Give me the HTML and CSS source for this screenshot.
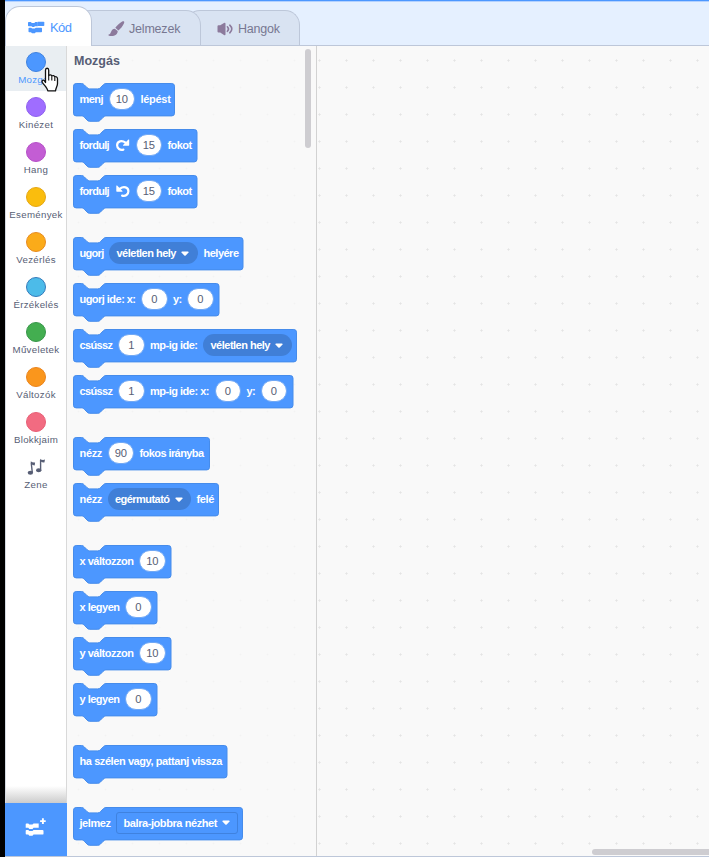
FILE: index.html
```
<!DOCTYPE html>
<html lang="hu">
<head>
<meta charset="utf-8">
<title>Kód</title>
<link rel="stylesheet" href="styles.css">
</head>
<body>
<div class="app">
  <nav class="tabs">
    <div class="tab active">
      <svg width="17" height="13" viewBox="0 0 17 13" fill="#4c97ff"><path d="M.8 1h2l1 1h2.500l1-1h1.700q.8 0 .8.800v3.400h-2.800l-1 .9H4.500l-1-.9H.8Q0 5.200 0 4.500V1.800Q0 1 .8 1Z"/><path d="M9.600.8h5.900q.8 0 .8.800v2.600q0 .8-.8.800h-5.900z"/><path d="M1.300 6.700h1.800l1 .9h2.700l1-.9h5.400q.8 0 .8.800v3q0 .8-.8.800H7.800l-1 .9H4l-1-.9H1.300q-.8 0-.8-.8v-3q0-.8.8-.8Z"/></svg>
      <span>Kód</span>
    </div>
    <div class="tab costumes">
      <svg width="17" height="16" viewBox="0 0 17 16" fill="#8c7a9c"><path d="M15.800.3c.7.500.5 1.300.1 2.100-1.300 2.600-3.300 5.400-5.500 7L7.300 6.800C9.100 4.500 11.800 2.100 14.200.6c.6-.4 1.100-.6 1.600-.3Z"/><path d="M6.800 7.700 9.700 10c.2 3.500-3.700 5.700-7.800 4.900C.9 14.700.3 14.300.3 14c0-.4.900-.3 1.600-.9 1.400-1.200 1-5 4.900-5.400Z"/></svg>
      <span>Jelmezek</span>
    </div>
    <div class="tab sounds">
      <svg width="17" height="14" viewBox="0 0 17 14" fill="#8c7a9c"><path d="M.5 4.200Q.5 3.300 1.500 3.300H3.200L7 .9Q8.500.3 8.500 1.700V12.300Q8.500 13.700 7 12.900L3.200 10.500H1.500Q.5 10.500.5 9.600Z"/><path d="M10.400 4.800q2.200 2.200 0 4.500M12.800 3.200q4 3.800 0 7.600" fill="none" stroke="#8c7a9c" stroke-width="1.600" stroke-linecap="round"/></svg>
      <span>Hangok</span>
    </div>
  </nav>
  <main class="editor">
    <aside class="sidebar">
      <ul class="categories">
        <li class="category selected"><i class="dot motion"></i>Mozgás</li>
        <li class="category"><i class="dot looks"></i>Kinézet</li>
        <li class="category"><i class="dot sound"></i>Hang</li>
        <li class="category"><i class="dot events"></i>Események</li>
        <li class="category"><i class="dot control"></i>Vezérlés</li>
        <li class="category"><i class="dot sensing"></i>Érzékelés</li>
        <li class="category"><i class="dot operators"></i>Műveletek</li>
        <li class="category"><i class="dot variables"></i>Változók</li>
        <li class="category"><i class="dot custom"></i>Blokkjaim</li>
        <li class="category"><svg class="music" width="20" height="20" viewBox="0 0 20 20"><g fill="#575e75" stroke="#575e75"><ellipse cx="4.400" cy="15.800" rx="2.700" ry="2" stroke="none"/><path d="M6.300 15.500 5.200 5.500" fill="none" stroke-width="1.400"/><path d="M4.700 4.200q2 1.800 4.400 1.300l-.4 3Q6.500 8.300 5.300 7Z" stroke="none"/><ellipse cx="12.700" cy="13.200" rx="2.700" ry="2" stroke="none"/><path d="M14.600 13V3" fill="none" stroke-width="1.400"/><path d="M14 1.700q2 1.800 5 .9l-.6 2.800q-2 .2-3.700-.9Z" stroke="none"/></g></svg>Zene</li>
      </ul>
      <button class="extension" aria-label="Kiterjesztés">
        <svg width="24" height="20" viewBox="0 0 24 20" fill="#fff"><path d="M2.500 6.500h1.800l1 1h3.200l1-1h5.200v4.200H9.500l-1 1.200H5.300l-1-1.200H1.700V7.300q0-.8.800-.8Z"/><path d="M2.500 13h1.800l1 1h3.200l1-1h9q1 0 1 1v2.700q0 .9-1 .9h-9l-1 1.100H5.300l-1-1.100H2.500q-.8 0-.8-.8V13.800q0-.8.800-.8Z"/><path d="M18.900 1.300v5.600M16.100 4.100h5.600" stroke="#fff" stroke-width="1.900"/></svg>
      </button>
    </aside>
    <section class="palette">
      <div class="scroll"></div>
      <h1>Mozgás</h1>
      <div class="blocks" id="blocks"></div>
    </section>
    <section class="workspace"><div class="hscroll"></div></section>
  </main>
  <svg class="cursor" width="20" height="26" viewBox="0 0 20 26"><path d="M4.500 15.500V3.200C4.500.6 7.700.6 7.700 3.200V8.500C8.500 7.500 10.500 7.700 10.800 9 11.800 8.200 13.500 8.700 13.800 10 15 9.300 16.500 10 16.500 11.800V16.500C16.500 19 15 20.500 14.500 23.800H6.800C6.500 21 3 18 1.300 15.300.4 13.300 2.300 12.400 3.500 13.800Z" fill="#fff" stroke="#111" stroke-width="1.300" stroke-linejoin="round"/><path d="M7.700 8.500v5M10.800 9.500v4M13.800 10.500v3.500" stroke="#111" stroke-width="1.100"/></svg>
</div>
<script src="blocks.js"></script>
</body>
</html>
```
FILE: styles.css
```
* { box-sizing: border-box; }
body { margin: 0; background: #000; font-family: "Liberation Sans", Arial, sans-serif; color: #575e75; }
.app { position: relative; width: 704px; height: 857px; margin-left: 5px; display: flex; flex-direction: column; overflow: hidden; background: #e5f0ff; border-top: 1px solid #4c97ff; border-bottom: 1px solid #bdc7d9; box-shadow: inset 0 1px #b3d1ff; }
.tabs { height: 45px; display: flex; align-items: flex-end; border-bottom: 1px solid #bdc7d9; flex: none; }
.tab { position: relative; display: flex; align-items: center; height: 35px; padding-top: 1px; border: 1px solid #bdc7d9; border-bottom: 0; border-radius: 15px 15px 0 0; background: #d9e3f2; font-size: 12.500px; letter-spacing: -.2px; color: #777791; }
.tab.active { z-index: 3; width: 87px; height: 40px; margin-bottom: -1px; padding: 1px 0 0 22px; gap: 5px; background: #fff; color: #4c97ff; font-size: 13px; letter-spacing: -.6px; }
.tab.costumes { z-index: 2; width: 125px; margin-left: -16px; padding-left: 31px; gap: 4px; }
.tab.sounds { z-index: 1; width: 115px; margin-left: -16px; padding-left: 31px; gap: 4px; letter-spacing: -.2px; }
.editor { flex: 1; display: flex; min-height: 0; }
.sidebar { width: 62px; display: flex; flex-direction: column; justify-content: space-between; background: linear-gradient(#fff 740px, #c9c9c9 758px) #fff; border-left: 1px solid #d5dae2; border-right: 1px solid #d9d9d9; }
.categories { list-style: none; margin: 0; padding: 0; }
.category { height: 45px; padding-top: 6px; display: flex; flex-direction: column; align-items: center; gap: 2px; font-size: 9.700px; letter-spacing: .3px; line-height: 12px; white-space: nowrap; }
.selected { background: #e9eef2; color: #4c97ff; }
.dot { width: 20px; height: 20px; border-radius: 50%; border: 1px solid; flex: none; }
.motion { background: #4c97ff; border-color: #3f82df; }
.looks { background: #9f6dff; border-color: #8e61ee; }
.sound { background: #c35dd4; border-color: #b650c8; }
.events { background: #fabd0d; border-color: #e5a713; }
.control { background: #fbab19; border-color: #e88b20; }
.sensing { background: #4cbbe9; border-color: #347bbb; }
.operators { background: #43ae50; border-color: #38964a; }
.variables { background: #fa961c; border-color: #eb841c; }
.custom { background: #f26b81; border-color: #e85f76; }
.music { flex: none; }
.extension { height: 53px; margin: 0 -1px; padding: 0 0 5px; border: 0; background: #4c97ff; display: flex; align-items: center; justify-content: center; }
.palette { position: relative; width: 250px; padding: 7px 0 0 6px; border-right: 1px solid #d2d2d2; background: radial-gradient(circle, #f3f3f3 .8px, transparent 1.100px) -2px 1px / 27px 27px #f9f9f9; overflow: hidden; }
.palette h1 { margin: 0 0 14px 1px; font-size: 12.500px; line-height: 17px; height: 16px; font-weight: bold; }
.scroll { position: absolute; right: 5px; top: 3px; width: 6px; height: 99px; border-radius: 3px; background: #cecdd1; }
.blocks { display: flex; flex-direction: column; align-items: flex-start; }
.block { position: relative; display: flex; align-items: center; flex: none; height: 32.400px; margin-bottom: 13.600px; padding-left: 6.500px; gap: 5.500px; font-size: 11px; font-weight: bold; color: #fff; }
.block.group-end { margin-bottom: 29.600px; }
.shape { position: absolute; left: 0; top: 0; overflow: visible; fill: #4c97ff; stroke: #468ceb; stroke-width: 1; }
.block > span, .block > .icon { position: relative; flex: none; white-space: nowrap; }
.number { width: 26.500px; height: 21.600px; line-height: 21px; border-radius: 11px; background: #fff; border: .6px solid #70a8f5; color: #575e75; text-align: center; font-weight: normal; font-size: 11.200px; letter-spacing: -.2px; }
.menu { display: flex; align-items: center; height: 22px; padding-left: 7.500px; gap: 5px; border-radius: 11px; background: #407fd7; }
.menu.square { height: 22px; padding-left: 6.500px; border-radius: 3px; background: #4c97ff; border: 1px solid #3f82df; }
.menu svg { flex: none; }
.workspace { position: relative; flex: 1; background: radial-gradient(circle, #e4e4e4 .9px, transparent 1.200px) -11px 1px / 27px 27px #f9f9f9; }
.hscroll { position: absolute; right: -8px; bottom: 1px; width: 125px; height: 6px; border-radius: 3px; background: #cecdd1; }
.cursor { position: absolute; left: 36px; top: 66px; z-index: 5; }
```
FILE: blocks.js
```
// Block parts: t = label, n = number input, m = round menu, s = square menu, i = turn icon.
const blocks = [
  { w: 101.5, parts: [["t", "menj", 23.5], ["n", "10"], ["t", "lépést", 30]] },
  { w: 124, parts: [["t", "fordulj", 29.5], ["i", "cw"], ["n", "15"], ["t", "fokot", 24]] },
  { w: 124, end: true, parts: [["t", "fordulj", 29.5], ["i", "ccw"], ["n", "15"], ["t", "fokot", 24]] },
  { w: 170, parts: [["t", "ugorj", 24], ["m", "véletlen hely", 59.5, 89], ["t", "helyére", 35]] },
  { w: 146, parts: [["t", "ugorj ide: x:", 56], ["n", "0"], ["t", "y:", 8.5], ["n", "0"]] },
  { w: 223.5, parts: [["t", "csússz", 33], ["n", "1"], ["t", "mp-ig ide:", 47.5], ["m", "véletlen hely", 59.5, 89]] },
  { w: 220, end: true, parts: [["t", "csússz", 33], ["n", "1"], ["t", "mp-ig ide: x:", 59], ["n", "0"], ["t", "y:", 8.5], ["n", "0"]] },
  { w: 136.5, parts: [["t", "nézz", 22.5], ["n", "90"], ["t", "fokos irányba", 64]] },
  { w: 145.5, end: true, parts: [["t", "nézz", 22.5], ["m", "egérmutató", 54.5, 83.5], ["t", "felé", 17.5]] },
  { w: 98, parts: [["t", "x változzon", 54], ["n", "10"]] },
  { w: 84, parts: [["t", "x legyen", 40], ["n", "0"]] },
  { w: 98, parts: [["t", "y változzon", 54], ["n", "10"]] },
  { w: 84, end: true, parts: [["t", "y legyen", 40], ["n", "0"]] },
  { w: 154, end: true, parts: [["t", "ha szélen vagy, pattanj vissza", 142.5]] },
  { w: 169.5, parts: [["t", "jelmez", 31], ["s", "balra-jobbra nézhet", 93.5, 122]] }
];

const arrow = '<svg width="8" height="5" viewBox="0 0 8 5"><path d="M1 .5h6q1 .3.500 1L4.700 4.400q-.7.500-1.400 0L.5 1.500Q0 .8 1 .5Z" fill="#fff"/></svg>';
const turn = '<path d="M7.900 11.600C4.600 12.600 1.600 10.500 1.600 7.300 1.600 3.200 6.300 1.700 10 4.700" fill="none" stroke="#fff" stroke-width="2.200" stroke-linecap="round"/><path d="M13.700 1.800V7.100q0 .6-.6.600H7.900q-.8-.1-.3-.8L12.900 1.600q.7-.4.800.2Z" fill="#fff"/>';

function outline(w) {
  const r = w - 2.7;
  return `M.5 3.200Q.5 .5 3.200 .5H8.600C10 .5 10.600 1.200 11.300 1.900L14 4.600C14.700 5.300 15.400 5.900 16.700 5.900H24.800C26.200 5.900 26.800 5.300 27.500 4.600L30.200 1.900C30.900 1.200 31.600 .5 32.900 .5H${r}Q${w} .5 ${w} 3.200V30.200Q${w} 32.900 ${r} 32.900H32.900C31.600 32.900 30.900 33.600 30.200 34.300L27.500 37C26.800 37.700 26.200 38.300 24.800 38.300H16.700C15.400 38.300 14.700 37.700 14 37L11.300 34.300C10.600 33.600 10 32.900 8.600 32.900H3.200Q.5 32.900 .5 30.200Z`;
}

function part([type, text, textWidth, width]) {
  if (type === "n") return `<span class="number">${text}</span>`;
  if (type === "i") {
    const flip = text === "ccw" ? ' transform="matrix(-1 0 0 1 14.500 0)"' : "";
    return `<svg class="icon" width="15.500" height="14" viewBox="-.5 0 15.500 14"><g${flip}>${turn}</g></svg>`;
  }
  const label = `<span class="fit" data-width="${textWidth}">${text}</span>`;
  if (type === "t") return `<span style="width:${textWidth}px">${label}</span>`;
  return `<span class="menu${type === "s" ? " square" : ""}" style="width:${width}px">${label}${arrow}</span>`;
}

document.getElementById("blocks").innerHTML = blocks.map(b =>
  `<div class="block${b.end ? " group-end" : ""}" style="width:${b.w}px"><svg class="shape" width="${b.w}" height="39"><path d="${outline(b.w)}"/></svg>${b.parts.map(part).join("")}</div>`
).join("");

// Adjust tracking so each label fills its slot.
document.querySelectorAll(".fit").forEach(el => {
  const extra = el.dataset.width - el.getBoundingClientRect().width;
  el.style.letterSpacing = extra / el.textContent.length + "px";
});
```
